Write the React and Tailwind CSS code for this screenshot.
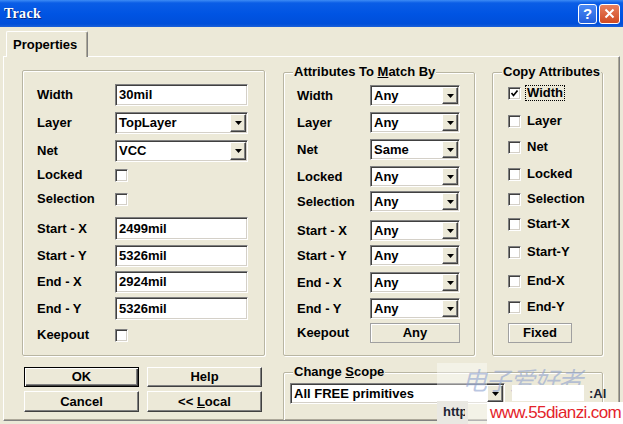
import React from "react";

const sunken =
  "border border-t-[#808080] border-l-[#808080] border-r-white border-b-white shadow-[inset_1px_1px_0_#404040,inset_-1px_-1px_0_#d4d0c8]";
const raised =
  "border border-t-white border-l-white border-r-[#404040] border-b-[#404040] shadow-[inset_-1px_-1px_0_#808080]";

function Arrow() {
  return (
    <svg width="7" height="4" viewBox="0 0 7 4">
      <path d="M0 0h7L3.5 4z" fill="#000" />
    </svg>
  );
}

function TextBox({ value, cls }) {
  return (
    <div className={`${sunken} bg-white flex items-center pl-[3px] ${cls}`}>
      {value}
    </div>
  );
}

function Combo({ value, cls }) {
  return (
    <div className={`${sunken} bg-white flex items-stretch ${cls}`}>
      <div className="flex-1 flex items-center pl-[3px] overflow-hidden whitespace-nowrap">
        {value}
      </div>
      <div
        className={`${raised} w-[16px] my-[1px] mr-[1px] bg-[#ece9d8] flex items-center justify-center`}
      >
        <Arrow />
      </div>
    </div>
  );
}

function Check({ checked }) {
  return (
    <div className={`${sunken} bg-white w-[13px] h-[13px] flex items-center justify-center shrink-0`}>
      {checked && (
        <svg width="9" height="9" viewBox="0 0 9 9">
          <path d="M1.5 4 L3.5 6.5 L7.5 1.5" stroke="#000" strokeWidth="1.7" fill="none" />
        </svg>
      )}
    </div>
  );
}

function GroupBox({ title, cls, children }) {
  return (
    <div
      className={`relative border border-[#b8b5a2] rounded-[2px] shadow-[inset_1px_1px_0_#fff,1px_1px_0_#fff] ${cls}`}
    >
      {title && (
        <div className="absolute -top-[9px] left-[9px] px-[1px] bg-[#ece9d8] leading-[16px] whitespace-nowrap">
          {title}
        </div>
      )}
      {children}
    </div>
  );
}

const leftRows = [
  { label: "Width", type: "text", value: "30mil", m: "", h: "h-[22px]" },
  { label: "Layer", type: "combo", value: "TopLayer", m: "mt-[6px]", h: "h-[22px]" },
  { label: "Net", type: "combo", value: "VCC", m: "mt-[6px]", h: "h-[22px]" },
  { label: "Locked", type: "check", m: "mt-[3px]", h: "h-[20px]" },
  { label: "Selection", type: "check", m: "mt-[4px]", h: "h-[20px]" },
  { label: "Start - X", type: "text", value: "2499mil", m: "mt-[8px]", h: "h-[23px]" },
  { label: "Start - Y", type: "text", value: "5326mil", m: "mt-[5px]", h: "h-[22px]" },
  { label: "End - X", type: "text", value: "2924mil", m: "mt-[4px]", h: "h-[22px]" },
  { label: "End - Y", type: "text", value: "5326mil", m: "mt-[4px]", h: "h-[23px]" },
  { label: "Keepout", type: "check", m: "mt-[5px]", h: "h-[20px]" },
];

const midRows = [
  { label: "Width", value: "Any", m: "" },
  { label: "Layer", value: "Any", m: "mt-[6px]" },
  { label: "Net", value: "Same", m: "mt-[6px]" },
  { label: "Locked", value: "Any", m: "mt-[6px]" },
  { label: "Selection", value: "Any", m: "mt-[4px]" },
  { label: "Start - X", value: "Any", m: "mt-[8px]" },
  { label: "Start - Y", value: "Any", m: "mt-[4px]" },
  { label: "End - X", value: "Any", m: "mt-[6px]" },
  { label: "End - Y", value: "Any", m: "mt-[5px]" },
];

const copyRows = [
  { label: "Width", m: "", checked: true },
  { label: "Layer", m: "mt-[8px]" },
  { label: "Net", m: "mt-[6px]" },
  { label: "Locked", m: "mt-[7px]" },
  { label: "Selection", m: "mt-[5px]" },
  { label: "Start-X", m: "mt-[5px]" },
  { label: "Start-Y", m: "mt-[8px]" },
  { label: "End-X", m: "mt-[9px]" },
  { label: "End-Y", m: "mt-[6px]" },
];

function Button({ children, def }) {
  return (
    <div
      className={`h-full flex items-center justify-center bg-[#ece9d8] ${
        def
          ? "border border-black shadow-[inset_1px_1px_0_#fff,inset_-1px_-1px_0_#404040,inset_-2px_-2px_0_#808080]"
          : raised
      }`}
    >
      {children}
    </div>
  );
}

function FlatButton({ children, cls }) {
  return (
    <div
      className={`border border-[#a0a0a0] shadow-[inset_1px_1px_0_#fff] bg-[#ece9d8] flex items-center justify-center ${cls}`}
    >
      {children}
    </div>
  );
}

export default function App() {
  return (
    <div className="relative w-[623px] h-[424px] overflow-hidden bg-[#ece9d8] text-black text-[13px] font-bold font-['Liberation_Sans',Arial,sans-serif] leading-[16px]">
      {/* Title bar */}
      <div className="h-[27px] bg-[linear-gradient(to_bottom,#3d8bf5_0px,#0a5de6_3px,#0054e3_14px,#004fd9_24px,#1b60d8_27px)] flex items-center pl-[4px] pr-[3px]">
        <div className="text-white text-[14px] font-bold font-['Liberation_Serif',serif] tracking-[0.3px] [text-shadow:1px_1px_0_#0a2a80]">
          Track
        </div>
        <div className="flex-1" />
        <div className="flex gap-[2px] items-center">
          <div className="w-[19px] h-[20px] rounded-[3px] border border-white bg-[linear-gradient(to_bottom,#4b8af5,#225fdc)] flex items-center justify-center text-white text-[15px] font-bold font-['Liberation_Sans',sans-serif]">
            ?
          </div>
          <div className="w-[21px] h-[20px] rounded-[3px] border border-white bg-[linear-gradient(to_bottom,#e8805e,#d04a22)] flex items-center justify-center">
            <svg width="11" height="11" viewBox="0 0 11 11">
              <path d="M1.5 1.5 L9.5 9.5 M9.5 1.5 L1.5 9.5" stroke="#fff" strokeWidth="2" />
            </svg>
          </div>
        </div>
      </div>

      {/* Body */}
      <div className="pt-[4px] px-[3px]">
        <div className="h-[25px] flex">
          <div className="relative z-10 ml-[3px] w-[82px] h-[26px] bg-[#ece9d8] border-t border-l border-r border-t-white border-l-white border-r-[#808080] rounded-t-[2px] shadow-[inset_-1px_0_0_#aca899] pl-[6px] pt-[5px] text-[13px]">
            Properties
          </div>
        </div>
        <div className="w-[617px] h-[365px] border border-t-white border-l-white border-r-[#808080] border-b-[#808080] shadow-[inset_-1px_-1px_0_#aca899] pl-[18px] pt-[13px] overflow-hidden">
          <div className="flex gap-[18px] items-start">
            {/* Left column */}
            <div className="w-[243px]">
              <GroupBox cls="h-[286px] pt-[13px] pl-[14px]">
                {leftRows.map((r) => (
                  <div key={r.label} className={`flex items-center ${r.m} ${r.h}`}>
                    <div className="w-[78px]">{r.label}</div>
                    {r.type === "text" && <TextBox value={r.value} cls="w-[133px] h-full" />}
                    {r.type === "combo" && <Combo value={r.value} cls="w-[133px] h-full" />}
                    {r.type === "check" && <Check />}
                  </div>
                ))}
              </GroupBox>
              <div className="mt-[11px] ml-[2px] grid grid-cols-[115px_115px] grid-rows-[20px_21px] gap-x-[8px] gap-y-[4px]">
                <Button def>OK</Button>
                <Button>Help</Button>
                <Button>Cancel</Button>
                <Button>
                  <span>
                    {"<< "}
                    <span className="underline">L</span>ocal
                  </span>
                </Button>
              </div>
            </div>

            {/* Right area */}
            <div className="w-[320px] mt-[2px]">
              <div className="flex gap-[17px]">
                <GroupBox
                  title={
                    <span>
                      Attributes To <span className="underline">M</span>atch By
                    </span>
                  }
                  cls="w-[192px] h-[284px] pt-[12px] pl-[13px]"
                >
                  {midRows.map((r) => (
                    <div key={r.label} className={`flex items-center h-[21px] ${r.m}`}>
                      <div className="w-[73px]">{r.label}</div>
                      <Combo value={r.value} cls="w-[90px] h-full" />
                    </div>
                  ))}
                  <div className="flex items-center h-[20px] mt-[4px]">
                    <div className="w-[73px]">Keepout</div>
                    <FlatButton cls="w-[90px] h-full">Any</FlatButton>
                  </div>
                </GroupBox>
                <GroupBox title="Copy Attributes" cls="w-[111px] h-[284px] pt-[10px] pl-[15px]">
                  {copyRows.map((r) => (
                    <div key={r.label} className={`flex items-center h-[20px] ${r.m}`}>
                      <Check checked={r.checked} />
                      {r.checked ? (
                        <span className="ml-[4px] px-[1px] border border-dotted border-black leading-[14px]">
                          {r.label}
                        </span>
                      ) : (
                        <span className="ml-[6px]">{r.label}</span>
                      )}
                    </div>
                  ))}
                  <FlatButton cls="mt-[6px] w-[64px] h-[20px]">Fixed</FlatButton>
                </GroupBox>
              </div>
              <GroupBox
                title={
                  <span>
                    Change <span className="underline">S</span>cope
                  </span>
                }
                cls="mt-[16px] w-[320px] h-[60px] pt-[10px] pl-[6px]"
              >
                <Combo value="All FREE primitives" cls="w-[215px] h-[21px]" />
              </GroupBox>
            </div>
          </div>
        </div>
      </div>

      {/* Watermark overlay */}
      <div className="absolute left-[437px] top-[363px] w-[50px] h-[61px] bg-white/40" />
      <div className="absolute left-[437px] top-[401px] w-[31px] h-[23px] bg-[#e9e8e2] overflow-hidden whitespace-nowrap pl-[6px] pt-[3px] text-[#1c2433] text-[13px]">
        <div className="w-[22px] overflow-hidden">http</div>
      </div>
      <div className="absolute left-[462px] top-[363px] text-[25px] leading-[32px] font-normal text-[#8ea2cf]/60 font-['Noto_Sans_CJK_SC',sans-serif] italic tracking-[-1px]">
        电子爱好者
      </div>
      <div className="absolute left-[512px] top-[385px] w-[72px] h-[16px] bg-white" />
      <div className="absolute left-[589px] top-[386px] text-[13px] text-[#1c2433]">:Al</div>
      <div className="absolute left-[487px] top-[402px] w-[136px] h-[22px] bg-white pl-[3px] text-[17px] leading-[22px] font-normal text-[#e4232a] tracking-[-0.6px] font-['Liberation_Sans',sans-serif]">
        www.55dianzi.com
      </div>
    </div>
  );
}
